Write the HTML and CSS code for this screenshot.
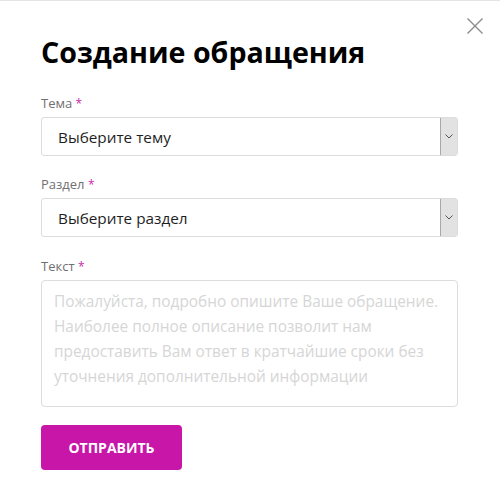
FILE: index.html
```html
<!DOCTYPE html>
<html lang="ru">
<head>
<meta charset="utf-8">
<link rel="stylesheet" href="styles.css">
</head>
<body>
<div class="modal">
  <button class="close" aria-label="Закрыть">
    <svg width="16" height="16" viewBox="0 0 16 16"><path d="M0.5 0.5 L15.5 15.5 M15.5 0.5 L0.5 15.5" stroke="#8a8a8a" stroke-width="1.4" fill="none"/></svg>
  </button>
  <h1 class="title">Создание обращения</h1>
  <div class="field">
    <div class="label">Тема <span class="req">*</span></div>
    <div class="select">
      <span class="select-text">Выберите тему</span>
      <span class="select-arrow"><svg width="8" height="5" viewBox="0 0 8 5"><path d="M0.5 0.5 L4 4 L7.5 0.5" stroke="#555" stroke-width="1" fill="none"/></svg></span>
    </div>
  </div>
  <div class="field">
    <div class="label">Раздел <span class="req">*</span></div>
    <div class="select">
      <span class="select-text">Выберите раздел</span>
      <span class="select-arrow"><svg width="8" height="5" viewBox="0 0 8 5"><path d="M0.5 0.5 L4 4 L7.5 0.5" stroke="#555" stroke-width="1" fill="none"/></svg></span>
    </div>
  </div>
  <div class="field field-text">
    <div class="label">Текст <span class="req">*</span></div>
    <div class="textarea">Пожалуйста, подробно опишите Ваше обращение. Наиболее полное описание позволит нам предоставить Вам ответ в кратчайшие сроки без уточнения дополнительной информации</div>
  </div>
  <button class="submit">ОТПРАВИТЬ</button>
</div>
</body>
</html>
```
FILE: styles.css
```css
html, body {
  margin: 0;
  padding: 0;
  background: #fff;
}
body {
  font-family: "Open Sans", "Noto Sans", sans-serif;
  width: 500px;
  height: 501px;
  overflow: hidden;
  border-top: 1px solid #e4e4e4;
  box-sizing: border-box;
}
.modal {
  position: relative;
  padding: 33px 42px 0 41px;
}
.close {
  position: absolute;
  top: 17px;
  right: 17px;
  width: 16px;
  height: 16px;
  padding: 0;
  border: 0;
  background: none;
  display: flex;
}
.title {
  margin: 0;
  font-size: 28.6px;
  line-height: 36px;
  font-weight: 700;
  color: #000;
  letter-spacing: 0;
}
.field {
  margin-top: 19px;
}
.title + .field {
  margin-top: 24px;
}
.field-text {
  margin-top: 20px;
}
.label {
  font-size: 13px;
  line-height: 18px;
  color: #707070;
  margin-bottom: 4px;
}
.req {
  color: #c72aa6;
  font-size: 12px;
}
.select {
  display: flex;
  align-items: stretch;
  height: 39px;
  border: 1px solid #dcdcdc;
  border-radius: 3px;
  box-sizing: border-box;
  background: #fff;
}
.select-text {
  flex: 1;
  display: flex;
  align-items: center;
  padding-left: 16px;
  font-size: 15.3px;
  color: #1e1e1e;
}
.select-arrow {
  width: 16px;
  background: #e2e2e2;
  border-left: 1px solid #a8a8a8;
  border-radius: 0 2px 2px 0;
  display: flex;
  align-items: center;
  justify-content: center;
}
.textarea {
  height: 127px;
  box-sizing: border-box;
  border: 1px solid #dcdcdc;
  border-radius: 4px;
  padding: 8px 12px;
  font-size: 15.4px;
  line-height: 25px;
  color: #d6d6d6;
}
.submit {
  margin-top: 18px;
  width: 141px;
  height: 45px;
  border: 0;
  border-radius: 4px;
  background: #c716a8;
  color: #fff;
  font-family: "Open Sans", "Noto Sans", sans-serif;
  font-weight: 700;
  font-size: 14px;
  padding: 0;
  display: block;
}
```
